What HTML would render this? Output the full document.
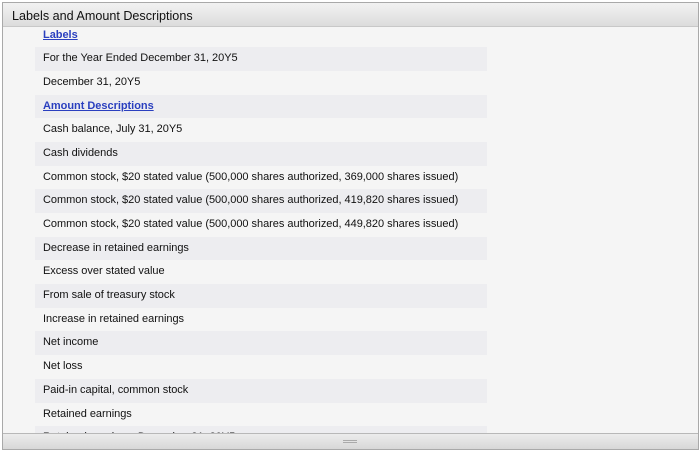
<!DOCTYPE html>
<html><head><style>
*{margin:0;padding:0;box-sizing:border-box}
body{width:700px;height:453px;background:#fff;font-family:"Liberation Sans",Arial,sans-serif;position:relative;overflow:hidden}
.frame{position:absolute;left:2px;top:2px;width:697px;height:448px;border:1px solid #a9a9a9;background:#f5f5f5;overflow:hidden}
.hdr{position:absolute;left:0;top:0;right:0;height:24px;background:linear-gradient(#f2f2f2,#dcdcdc);border-bottom:1px solid #c8c8c8;font-size:12.6px;color:#111;padding:6px 0 0 9px;z-index:2}
.rows{position:absolute;left:32px;top:20.5px;width:452px}
.r{height:23.7px;line-height:23.7px;font-size:11px;letter-spacing:-0.03px;color:#111;padding-left:8px;white-space:nowrap}
.r:nth-child(even){background:#ededf0}
.r a{color:#2a3fbf;font-weight:bold;text-decoration:underline}
.ftr{position:absolute;left:0;right:0;top:430px;height:17px;background:linear-gradient(#ececec,#d6d6d6);border-top:1px solid #b8b8b8;z-index:2}
.ftr i{position:absolute;left:340px;top:6px;width:14px;height:3px;border-top:1px solid #aaa;border-bottom:1px solid #aaa}
</style></head><body>
<div class="frame">
<div class="hdr">Labels and Amount Descriptions</div>
<div class="rows">
<div class="r"><a>Labels</a></div>
<div class="r">For the Year Ended December 31, 20Y5</div>
<div class="r">December 31, 20Y5</div>
<div class="r"><a>Amount Descriptions</a></div>
<div class="r">Cash balance, July 31, 20Y5</div>
<div class="r">Cash dividends</div>
<div class="r">Common stock, $20 stated value (500,000 shares authorized, 369,000 shares issued)</div>
<div class="r">Common stock, $20 stated value (500,000 shares authorized, 419,820 shares issued)</div>
<div class="r">Common stock, $20 stated value (500,000 shares authorized, 449,820 shares issued)</div>
<div class="r">Decrease in retained earnings</div>
<div class="r">Excess over stated value</div>
<div class="r">From sale of treasury stock</div>
<div class="r">Increase in retained earnings</div>
<div class="r">Net income</div>
<div class="r">Net loss</div>
<div class="r">Paid-in capital, common stock</div>
<div class="r">Retained earnings</div>
<div class="r">Retained earnings, December 31, 20Y5</div>
</div>
<div class="ftr"><i></i></div>
</div>
</body></html>
